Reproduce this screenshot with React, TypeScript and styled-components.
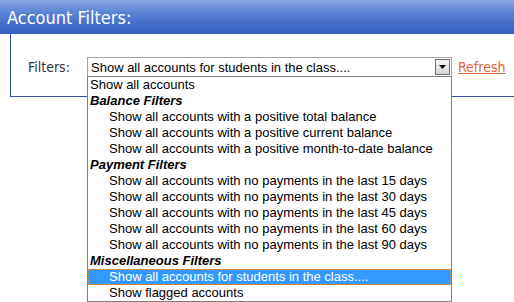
import * as React from 'react';
import styled, { createGlobalStyle } from 'styled-components';

const GlobalStyle = createGlobalStyle`
  html, body {
    margin: 0;
    padding: 0;
    background: #ffffff;
  }
`;

const Page = styled.div`
  width: 514px;
  height: 302px;
  overflow: hidden;
  position: relative;
`;

const Header = styled.div`
  height: 34px;
  display: flex;
  align-items: center;
  padding-left: 7px;
  color: #ffffff;
  font-family: 'DejaVu Sans Condensed', 'DejaVu Sans', sans-serif;
  font-size: 18px;
  background: linear-gradient(to bottom, #86a8e4 0%, #5c86d6 35%, #3f6bc8 75%, #3561be 100%);
`;

const Panel = styled.div`
  margin-left: 10px;
  border-left: 1px solid #3452a8;
  border-bottom: 1px solid #3452a8;
  padding: 23px 0 0 17px;
  box-sizing: border-box;
  height: 63px;
`;

const Row = styled.div`
  display: flex;
  align-items: center;
  height: 20px;
`;

const Label = styled.span`
  width: 44px;
  font-family: 'DejaVu Sans Condensed', 'DejaVu Sans', sans-serif;
  font-size: 14px;
  color: #333333;
  margin-right: 15px;
`;

const SelectWrap = styled.div`
  position: relative;
  width: 365px;
  height: 20px;
`;

const SelectBox = styled.div`
  box-sizing: border-box;
  height: 20px;
  border: 1px solid #a5a5a5;
  background: #ffffff;
  display: flex;
  align-items: center;
  padding-left: 3px;
  font-family: 'Liberation Sans', Arial, sans-serif;
  font-size: 13px;
  color: #000000;
`;

const SelectText = styled.span`
  flex: 1;
`;

const ArrowButton = styled.div`
  width: 15px;
  height: 16px;
  margin-right: 1px;
  box-sizing: border-box;
  border: 1px solid #6f6f6f;
  background: linear-gradient(to bottom, #f4f4f4, #d4d4d4);
  display: flex;
  align-items: center;
  justify-content: center;
`;

const List = styled.div`
  position: absolute;
  left: 0;
  top: 19px;
  width: 365px;
  box-sizing: border-box;
  border: 1px solid #808080;
  background: #ffffff;
  font-family: 'Liberation Sans', Arial, sans-serif;
  font-size: 13px;
  z-index: 10;
`;

const Item = styled.div<{ $indent?: boolean; $group?: boolean; $selected?: boolean }>`
  height: 16px;
  line-height: 16px;
  box-sizing: border-box;
  padding-left: ${(p) => (p.$indent ? '21px' : '2px')};
  white-space: nowrap;
  font-weight: ${(p) => (p.$group ? 'bold' : 'normal')};
  font-style: ${(p) => (p.$group ? 'italic' : 'normal')};
  color: ${(p) => (p.$selected ? '#ffffff' : '#000000')};
  background: ${(p) => (p.$selected ? '#3399ff' : 'transparent')};
  ${(p) => (p.$selected ? 'outline: 1px dotted #e8903a; outline-offset: -1px;' : '')}
`;

const RefreshLink = styled.a`
  margin-left: 6px;
  font-family: 'DejaVu Sans Condensed', 'DejaVu Sans', sans-serif;
  font-size: 14px;
  color: #e0663c;
  text-decoration: underline;
  cursor: pointer;
`;

type Option = {
  text: string;
  group?: boolean;
  indent?: boolean;
  selected?: boolean;
};

const options: Option[] = [
  { text: 'Show all accounts' },
  { text: 'Balance Filters', group: true },
  { text: 'Show all accounts with a positive total balance', indent: true },
  { text: 'Show all accounts with a positive current balance', indent: true },
  { text: 'Show all accounts with a positive month-to-date balance', indent: true },
  { text: 'Payment Filters', group: true },
  { text: 'Show all accounts with no payments in the last 15 days', indent: true },
  { text: 'Show all accounts with no payments in the last 30 days', indent: true },
  { text: 'Show all accounts with no payments in the last 45 days', indent: true },
  { text: 'Show all accounts with no payments in the last 60 days', indent: true },
  { text: 'Show all accounts with no payments in the last 90 days', indent: true },
  { text: 'Miscellaneous Filters', group: true },
  { text: 'Show all accounts for students in the class....', indent: true, selected: true },
  { text: 'Show flagged accounts', indent: true },
];

export default function App() {
  const selected = options.find((o) => o.selected);

  return (
    <Page>
      <GlobalStyle />
      <Header>Account Filters:</Header>
      <Panel>
        <Row>
          <Label>Filters:</Label>
          <SelectWrap>
            <SelectBox>
              <SelectText>{selected?.text}</SelectText>
              <ArrowButton>
                <svg width="7" height="4" viewBox="0 0 7 4">
                  <path d="M0 0 H7 L3.5 4 Z" fill="#000" />
                </svg>
              </ArrowButton>
            </SelectBox>
            <List>
              {options.map((o) => (
                <Item key={o.text} $group={o.group} $indent={o.indent} $selected={o.selected}>
                  {o.text}
                </Item>
              ))}
            </List>
          </SelectWrap>
          <RefreshLink>Refresh</RefreshLink>
        </Row>
      </Panel>
    </Page>
  );
}
